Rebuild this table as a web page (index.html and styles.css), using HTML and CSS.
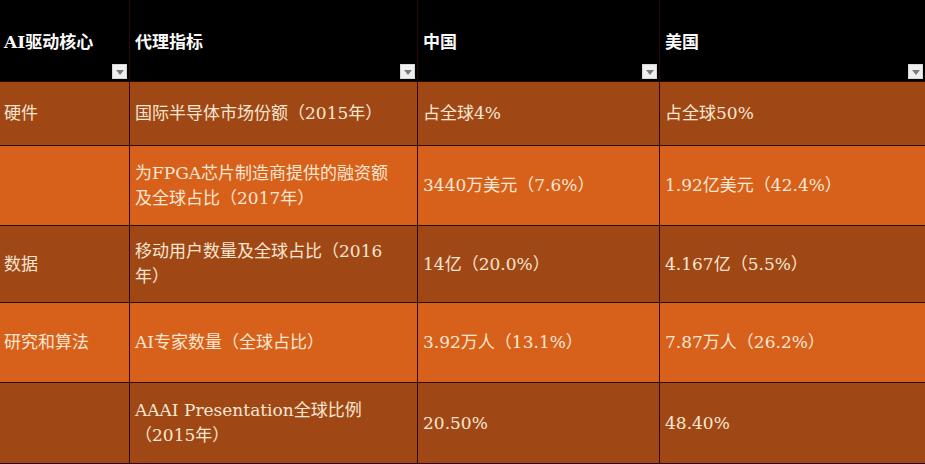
FILE: index.html
```html
<!DOCTYPE html>
<html lang="zh">
<head>
<meta charset="utf-8">
<title>AI驱动核心</title>
<link rel="stylesheet" href="styles.css">
</head>
<body>
<div class="table">
  <div class="th"><span class="th-text">AI驱动核心</span><span class="filter"></span></div>
  <div class="th"><span class="th-text">代理指标</span><span class="filter"></span></div>
  <div class="th"><span class="th-text">中国</span><span class="filter"></span></div>
  <div class="th"><span class="th-text">美国</span><span class="filter"></span></div>

  <div class="td dark">硬件</div>
  <div class="td dark">国际半导体市场份额（2015年）</div>
  <div class="td dark">占全球4%</div>
  <div class="td dark">占全球50%</div>

  <div class="td light"></div>
  <div class="td light">为FPGA芯片制造商提供的融资额及全球占比（2017年）</div>
  <div class="td light">3440万美元（7.6%）</div>
  <div class="td light">1.92亿美元（42.4%）</div>

  <div class="td dark">数据</div>
  <div class="td dark">移动用户数量及全球占比（2016年）</div>
  <div class="td dark">14亿（20.0%）</div>
  <div class="td dark">4.167亿（5.5%）</div>

  <div class="td light">研究和算法</div>
  <div class="td light">AI专家数量（全球占比）</div>
  <div class="td light">3.92万人（13.1%）</div>
  <div class="td light">7.87万人（26.2%）</div>

  <div class="td dark"></div>
  <div class="td dark">AAAI Presentation全球比例（2015年）</div>
  <div class="td dark">20.50%</div>
  <div class="td dark">48.40%</div>
</div>
</body>
</html>
```

FILE: styles.css
```css
html, body {
  margin: 0;
  padding: 0;
  background: #000;
}

body {
  width: 925px;
  height: 464px;
  overflow: hidden;
  font-family: "DejaVu Serif", "Noto Sans CJK SC", serif;
}

.table {
  display: grid;
  grid-template-columns: 129px 287px 241px 1fr;
  grid-template-rows: 81px 63px 79px 76px 79px 80px;
  column-gap: 1px;
  row-gap: 1px;
  background: #2e0806;
  width: 925px;
  height: 464px;
  padding-bottom: 1px;
  box-sizing: border-box;
}

.th {
  background: #000;
  color: #fbfbfb;
  font-weight: bold;
  font-size: 17px;
  line-height: 22px;
  display: flex;
  flex-direction: column;
  padding: 31px 2px 2px 5px;
  box-sizing: border-box;
}

.th:first-child {
  padding-left: 4px;
}

.th-text {
  display: block;
}

.filter {
  margin-top: auto;
  align-self: flex-end;
  width: 15px;
  height: 15px;
  background: #efefef;
  box-sizing: border-box;
  border: 1px solid #d6d6d6;
  display: flex;
  align-items: center;
  justify-content: center;
}

.filter::after {
  content: "";
  width: 0;
  height: 0;
  border-left: 4.5px solid transparent;
  border-right: 4.5px solid transparent;
  border-top: 5px solid #7b7b7b;
  margin-top: 1px;
}

.td {
  display: flex;
  align-items: center;
  padding: 0 20px 0 5px;
  box-sizing: border-box;
  color: #f7e6d2;
  font-size: 17px;
  line-height: 25px;
}

.td:nth-child(4n+1) {
  padding-left: 4px;
}

.dark {
  background: #a04815;
}

.light {
  background: #d7611b;
}
```
